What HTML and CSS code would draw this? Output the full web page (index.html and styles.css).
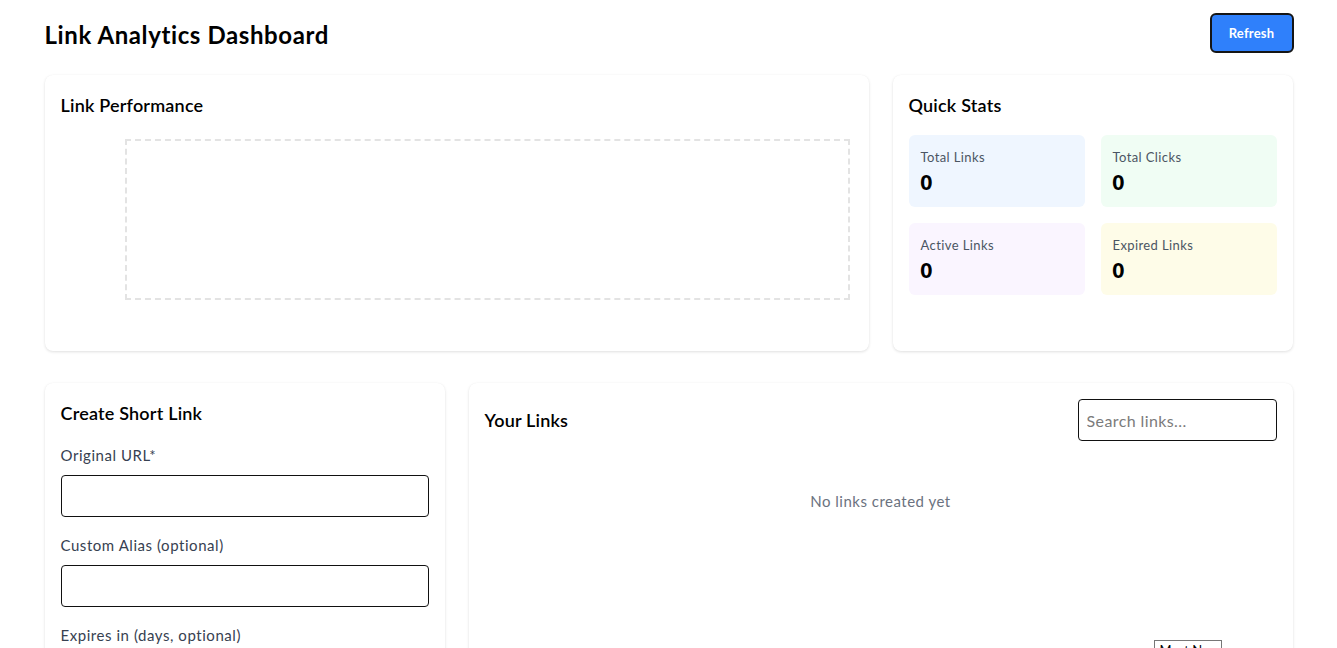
FILE: index.html
```html
<!DOCTYPE html>
<html lang="en">
<head>
<meta charset="utf-8">
<title>Link Analytics Dashboard</title>
<link rel="stylesheet" href="styles.css">
</head>
<body>
<div class="container">
  <header class="header">
    <h1 class="title">Link Analytics Dashboard</h1>
    <button class="refresh">Refresh</button>
  </header>

  <section class="row row-top">
    <div class="card">
      <h2 class="card-title">Link Performance</h2>
      <div class="chart-wrap">
        <div class="chart-plot"></div>
      </div>
    </div>
    <div class="card">
      <h2 class="card-title">Quick Stats</h2>
      <div class="stats">
        <div class="stat stat-blue"><div class="stat-label">Total Links</div><div class="stat-value">0</div></div>
        <div class="stat stat-green"><div class="stat-label">Total Clicks</div><div class="stat-value">0</div></div>
        <div class="stat stat-purple"><div class="stat-label">Active Links</div><div class="stat-value">0</div></div>
        <div class="stat stat-yellow"><div class="stat-label">Expired Links</div><div class="stat-value">0</div></div>
      </div>
    </div>
  </section>

  <section class="row row-bottom">
    <div class="card">
      <h2 class="card-title">Create Short Link</h2>
      <div class="field">
        <label class="label">Original URL*</label>
        <input class="input" type="text">
      </div>
      <div class="field">
        <label class="label">Custom Alias (optional)</label>
        <input class="input" type="text">
      </div>
      <div class="field">
        <label class="label">Expires in (days, optional)</label>
        <input class="input" type="number">
      </div>
    </div>
    <div class="card">
      <div class="links-head">
        <h2 class="card-title flush">Your Links</h2>
        <input class="input search" type="text" placeholder="Search links...">
      </div>
      <div class="empty">No links created yet</div>
      <div class="sort-row"><span class="sort-box">Most New</span></div>
    </div>
  </section>
</div>
</body>
</html>
```
FILE: styles.css
```css
* { box-sizing: border-box; }
html, body { margin: 0; padding: 0; background: #fff; }
body {
  font-family: Lato, "Noto Sans", "Liberation Sans", sans-serif;
  color: #000;
  overflow: hidden;
  height: 648px;
}
.container {
  max-width: 1280px;
  margin: 0 auto;
  padding: 13px 16px 0;
}
.header {
  display: flex;
  justify-content: space-between;
  align-items: center;
  height: 40px;
  margin-bottom: 22px;
}
.title {
  margin: 0;
  padding-top: 3px;
  font-size: 24px;
  font-weight: 700;
  line-height: 32px;
  letter-spacing: 0.6px;
}
.refresh {
  width: 84px;
  height: 40px;
  background: #2f80fb;
  color: #fff;
  border: 2px solid #151515;
  border-radius: 6px;
  font-family: inherit;
  font-size: 13px;
  font-weight: 700;
  letter-spacing: 0.2px;
  margin-right: -1px;
}
.row { display: grid; gap: 24px; }
.row-top { grid-template-columns: 1fr 400px; margin-bottom: 32px; }
.row-bottom { grid-template-columns: 400px 1fr; }
.card {
  background: #fff;
  border-radius: 8px;
  box-shadow: 0 1px 3px rgba(0,0,0,0.12), 0 0 1px rgba(0,0,0,0.04);
  padding: 16px;
}
.card-title {
  margin: 0 0 16px;
  font-size: 18px;
  font-weight: 600;
  line-height: 28px;
  letter-spacing: 0.2px;
}
.card-title.flush { margin: 0; }
.chart-wrap {
  height: 200px;
  padding: 4px 3px 35px 64px;
}
.chart-plot {
  height: 100%;
  border: 2px dashed #e3e3e3;
}
.stats {
  display: grid;
  grid-template-columns: 1fr 1fr;
  gap: 16px;
}
.stat {
  height: 72px;
  border-radius: 6px;
  padding: 12px 12px;
}
.stat-blue { background: #eff6ff; }
.stat-green { background: #f0fdf4; }
.stat-purple { background: #faf5ff; }
.stat-yellow { background: #fefce8; }
.stat-label {
  font-size: 13px;
  line-height: 20px;
  color: #4b5563;
  letter-spacing: 0.4px;
}
.stat-value {
  font-size: 20px;
  font-weight: 800;
  line-height: 26px;
  margin-top: 2px;
}
.field { margin-bottom: 16px; }
.label {
  display: block;
  font-size: 15px;
  line-height: 24px;
  color: #374151;
  margin-bottom: 8px;
  letter-spacing: 0.55px;
}
.input {
  display: block;
  width: 100%;
  height: 42px;
  border: 1px solid #111;
  border-radius: 4px;
  padding: 0 8px;
  font-family: inherit;
  font-size: 16px;
  background: #fff;
}
.links-head {
  display: flex;
  justify-content: space-between;
  align-items: center;
}
.search { width: 199px; letter-spacing: 0.4px; }
.search::placeholder { color: #7b7b7b; }
.empty {
  text-align: center;
  color: #6b7280;
  font-size: 15px;
  line-height: 24px;
  padding: 48px 0 0;
  letter-spacing: 0.5px;
}
.sort-row {
  display: flex;
  justify-content: flex-end;
  margin-top: 127px;
  padding-right: 55px;
}
.sort-box {
  display: inline-block;
  width: 68px;
  height: 20px;
  border: 1px solid #777;
  font-size: 13px;
  padding-left: 5px;
  line-height: 18px;
}
```
